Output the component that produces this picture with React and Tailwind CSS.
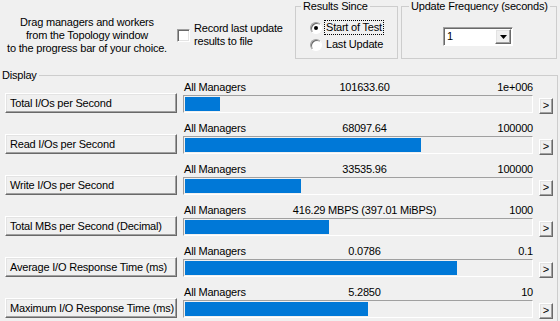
import React from 'react';

const rows = [
  { label: 'Total I/Os per Second', value: '101633.60', max: '1e+006', pct: 10.16 },
  { label: 'Read I/Os per Second', value: '68097.64', max: '100000', pct: 68.1 },
  { label: 'Write I/Os per Second', value: '33535.96', max: '100000', pct: 33.54 },
  { label: 'Total MBs per Second (Decimal)', value: '416.29 MBPS (397.01 MiBPS)', max: '1000', pct: 41.63 },
  { label: 'Average I/O Response Time (ms)', value: '0.0786', max: '0.1', pct: 78.6 },
  { label: 'Maximum I/O Response Time (ms)', value: '5.2850', max: '10', pct: 52.85 },
];

// classic raised 3D button edge
const raised =
  'border border-t-white border-l-white border-r-[#696969] border-b-[#696969] bg-[#f0f0f0] shadow-[inset_-1px_-1px_0_#a0a0a0,inset_1px_1px_0_#e3e3e3]';

const Radio = ({ checked }) => (
  <div className="w-[12px] h-[12px] rounded-full border border-t-[#a0a0a0] border-l-[#a0a0a0] border-r-white border-b-white bg-white shadow-[inset_1px_1px_0_#696969] flex items-center justify-center shrink-0">
    {checked && <div className="w-[4px] h-[4px] rounded-full bg-black" />}
  </div>
);

const MeterRow = ({ row }) => (
  <div className="flex h-[41px] shrink-0">
    <div className={`${raised} ml-[8px] mt-[12px] w-[172px] h-[20px] pl-[4px] shrink-0 flex items-center whitespace-nowrap`}>
      {row.label}
    </div>
    <div className="ml-[6px] w-[350px] shrink-0">
      <div className="grid grid-cols-[105px_153px_1fr] h-[13px]">
        <span className="pl-[1px] whitespace-nowrap">All Managers</span>
        <span className="text-center whitespace-nowrap">{row.value}</span>
        <span className="text-right whitespace-nowrap">{row.max}</span>
      </div>
      <div className="mt-[1px] h-[18px] p-[1px] border border-t-[#a0a0a0] border-l-[#a0a0a0] border-r-white border-b-white bg-[#f0f0f0]">
        <div className="h-full bg-[#0078d7]" style={{ width: `${row.pct}%` }} />
      </div>
    </div>
    <div className={`${raised} ml-[6px] mt-[17px] w-[14px] h-[16px] pb-[2px] flex items-center justify-center shrink-0 tracking-normal leading-none`}>
      &gt;
    </div>
  </div>
);

export default function App() {
  return (
    <div className="w-[560px] h-[321px] overflow-hidden bg-[#f0f0f0] text-black text-[11px] leading-[13px] tracking-[-0.2px] font-['Liberation_Sans',Arial,sans-serif]">
      {/* top controls */}
      <div className="flex h-[69px]">
        <div className="w-[174px] shrink-0 text-center pt-[16px]">
          Drag managers and workers
          <br />
          from the Topology window
          <br />
          to the progress bar of your choice.
        </div>

        <div className="ml-[3px] w-[118px] shrink-0 flex items-start pt-[22px]">
          <div className="mt-[7px] w-[13px] h-[13px] shrink-0 bg-white border border-t-[#a0a0a0] border-l-[#a0a0a0] border-r-white border-b-white shadow-[inset_1px_1px_0_#696969,inset_-1px_-1px_0_#e3e3e3]" />
          <div className="ml-[4px] whitespace-nowrap">
            Record last update
            <br />
            results to file
          </div>
        </div>

        <fieldset className="w-[103px] h-[59px] shrink-0 border border-[#cdcdcd]">
          <legend className="ml-[5px] px-[2px]">Results Since</legend>
          <div className="ml-[14px] mt-[7px] flex flex-col gap-[2px]">
            <div className="flex items-center h-[15px]">
              <Radio checked />
              <span className="ml-[3px] px-[1px] outline outline-1 outline-dotted outline-black whitespace-nowrap">
                Start of Test
              </span>
            </div>
            <div className="flex items-center h-[15px]">
              <Radio />
              <span className="ml-[4px] whitespace-nowrap">Last Update</span>
            </div>
          </div>
        </fieldset>

        <fieldset className="ml-[3px] w-[156px] h-[59px] shrink-0 border border-[#cdcdcd]">
          <legend className="ml-[7px] px-[2px] whitespace-nowrap">Update Frequency (seconds)</legend>
          <div className="ml-[41px] mt-[14px] w-[70px] h-[19px] flex items-center bg-white border border-t-[#a0a0a0] border-l-[#a0a0a0] border-r-white border-b-white shadow-[inset_1px_1px_0_#696969]">
            <span className="flex-1 pl-[3px]">1</span>
            <div className={`${raised} w-[16px] h-[15px] mr-[1px] flex items-center justify-center`}>
              <svg width="7" height="4" viewBox="0 0 7 4">
                <polygon points="0,0 7,0 3.5,4" fill="#000" />
              </svg>
            </div>
          </div>
        </fieldset>
      </div>

      {/* display group */}
      <fieldset className="-ml-[4px] w-[562px] h-[260px] border border-[#cdcdcd]">
        <legend className="ml-[3px] px-[2px]">Display</legend>
        <div className="-mt-[1px] flex flex-col">
          {rows.map((row) => (
            <MeterRow key={row.label} row={row} />
          ))}
        </div>
      </fieldset>
    </div>
  );
}
